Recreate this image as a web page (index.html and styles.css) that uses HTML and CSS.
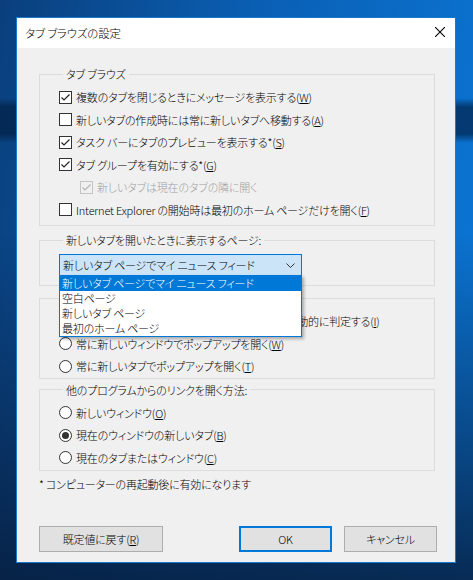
FILE: index.html
```html
<!DOCTYPE html>
<html lang="ja">
<head>
  <meta charset="UTF-8" />
  <title>タブ ブラウズの設定</title>
  <link rel="stylesheet" href="styles.css">
</head>
<body>

<div class="dialog">
  <div class="titlebar">
    <span class="title">タブ ブラウズの設定</span>
    <span class="close">
      <svg width="10" height="10" viewBox="0 0 10 10"><path d="M0 0L10 10M10 0L0 10" stroke="#000" stroke-width="1.1" fill="none"/></svg>
    </span>
  </div>

  <div class="content">
    <fieldset class="group group-tabs">
      <legend>タブ ブラウズ</legend>
      <div class="row"><span class="check on"></span>複数のタブを閉じるときにメッセージを表示する(<u>W</u>)</div>
      <div class="row"><span class="check"></span>新しいタブの作成時には常に新しいタブへ移動する(<u>A</u>)</div>
      <div class="row"><span class="check on"></span>タスク バーにタブのプレビューを表示する*(<u>S</u>)</div>
      <div class="row"><span class="check on"></span>タブ グループを有効にする*(<u>G</u>)</div>
      <div class="row sub disabled"><span class="check on"></span>新しいタブは現在のタブの隣に開く</div>
      <div class="row"><span class="check"></span>Internet Explorer の開始時は最初のホーム ページだけを開く(<u>F</u>)</div>
    </fieldset>

    <fieldset class="group group-page">
      <legend>新しいタブを開いたときに表示するページ:</legend>
      <div class="combo">
        <span class="combo-value">新しいタブ ページでマイ ニュース フィード</span>
        <svg class="combo-arrow" width="9" height="5" viewBox="0 0 9 5"><path d="M0.5 0.5L4.5 4.5L8.5 0.5" stroke="#333" stroke-width="1" fill="none"/></svg>
        <ul class="combo-list">
          <li class="combo-item selected">新しいタブ ページでマイ ニュース フィード</li>
          <li class="combo-item">空白ページ</li>
          <li class="combo-item">新しいタブ ページ</li>
          <li class="combo-item">最初のホーム ページ</li>
        </ul>
      </div>
    </fieldset>

    <fieldset class="group group-popup">
      <legend>ポップアップの発生時:</legend>
      <div class="row"><span class="radio"></span>ポップアップを開く方法を Internet Explorer で自動的に判定する(<u>I</u>)</div>
      <div class="row"><span class="radio"></span>常に新しいウィンドウでポップアップを開く(<u>W</u>)</div>
      <div class="row"><span class="radio"></span>常に新しいタブでポップアップを開く(<u>T</u>)</div>
    </fieldset>

    <fieldset class="group group-links">
      <legend>他のプログラムからのリンクを開く方法:</legend>
      <div class="row"><span class="radio"></span>新しいウィンドウ(<u>O</u>)</div>
      <div class="row"><span class="radio on"></span>現在のウィンドウの新しいタブ(<u>B</u>)</div>
      <div class="row"><span class="radio"></span>現在のタブまたはウィンドウ(<u>C</u>)</div>
    </fieldset>

    <p class="note">* コンピューターの再起動後に有効になります</p>
  </div>

  <div class="buttons">
    <button class="btn btn-reset">既定値に戻す(<u>R</u>)</button>
    <div class="btn-group">
      <button class="btn btn-ok">OK</button>
      <button class="btn">キャンセル</button>
    </div>
  </div>
</div>

</body>
</html>
```

FILE: styles.css
```css
html, body {
  margin: 0;
  height: 580px;
  overflow: hidden;
}

body {
  padding: 17px 0 0 16px;
  box-sizing: border-box;
  font-family: "Noto Sans CJK JP", "Noto Sans", sans-serif;
  font-size: 11px;
  font-weight: 300;
  letter-spacing: -0.2px;
  line-height: 16px;
  font-feature-settings: "palt";
  color: #000;
  background-color: #0b4c8f;
  background-image:
    linear-gradient(180deg, rgba(0, 0, 0, 0) 98px, rgba(0, 28, 62, 0.65) 107px, rgba(0, 28, 62, 0.65) 134px, rgba(0, 0, 0, 0) 143px),
    linear-gradient(180deg, rgba(4, 20, 45, 0) 40%, rgba(6, 24, 52, 0.8) 100%),
    linear-gradient(100deg, #0a3f7c 0%, #0a5fb4 45%, #0b78d8 100%);
}

/* Dialog frame */
.dialog {
  width: 440px;
  height: 546px;
  box-sizing: border-box;
  border: 1px solid #1979ca;
  background: #f0f0f0;
  display: flex;
  flex-direction: column;
}

.titlebar {
  height: 30px;
  background: #fff;
  display: flex;
  align-items: center;
}
.title {
  padding-left: 8px;
  flex: 1;
  font-size: 11.5px;
}
.close {
  width: 30px;
  height: 30px;
  display: flex;
  align-items: center;
  justify-content: center;
  margin-top: -2px;
}

.content {
  flex: 1;
  padding: 18px 20px 0 22px;
}

/* Group boxes */
.group {
  margin: 0;
  border: 1px solid #dcdcdc;
  padding: 4px 10px 4px 19px;
  min-width: 0;
}
.group legend {
  padding: 0 3px;
  margin-left: 4px;
  line-height: 16px;
}
.group-page {
  margin-top: 6px;
  padding: 6px 10px 9px 19px;
}
.group-popup {
  margin-top: 4px;
  padding-bottom: 0;
}
.group-links {
  margin-top: 3px;
  padding-bottom: 1px;
}

.row {
  height: 22.5px;
  display: flex;
  align-items: center;
  white-space: nowrap;
}
.row.sub {
  padding-left: 21px;
}
.row.disabled {
  color: #a0a0a0;
}

/* Check boxes and radio buttons */
.check, .radio {
  width: 13px;
  height: 13px;
  box-sizing: border-box;
  border: 1px solid #333;
  background: #fff;
  margin-right: 4px;
  flex: none;
  position: relative;
}
.check.on {
  background: #fff url("data:image/svg+xml,%3Csvg xmlns='http://www.w3.org/2000/svg' width='11' height='11' viewBox='0 0 11 11'%3E%3Cpath d='M1.5 5.5L4 8L9.5 2.5' stroke='%23222' stroke-width='1.2' fill='none'/%3E%3C/svg%3E") center / 11px 11px no-repeat;
}
.disabled .check {
  border-color: #c4c4c4;
  background-color: transparent;
}
.disabled .check.on {
  background: url("data:image/svg+xml,%3Csvg xmlns='http://www.w3.org/2000/svg' width='11' height='11' viewBox='0 0 11 11'%3E%3Cpath d='M1.5 5.5L4 8L9.5 2.5' stroke='%23b4b4b4' stroke-width='1.2' fill='none'/%3E%3C/svg%3E") center / 11px 11px no-repeat;
}
.radio {
  border-radius: 50%;
}
.radio.on::after {
  content: "";
  position: absolute;
  left: 2px;
  top: 2px;
  width: 7px;
  height: 7px;
  border-radius: 50%;
  background: #333;
}

/* Combo box with open list */
.combo {
  position: relative;
  width: 243px;
  height: 22px;
  box-sizing: border-box;
  border: 1px solid #0078d7;
  background: #cce4f7;
  display: flex;
  align-items: center;
  padding-left: 3px;
}
.combo-value {
  flex: 1;
  white-space: nowrap;
}
.combo-arrow {
  margin-right: 6px;
}
.combo-list {
  position: absolute;
  left: -1px;
  top: 20px;
  width: 243px;
  box-sizing: border-box;
  margin: 0;
  padding: 0;
  list-style: none;
  background: #fff;
  border: 1px solid #0078d7;
  box-shadow: 2px 2px 3px rgba(0, 0, 0, 0.3);
  z-index: 2;
}
.combo-item {
  height: 15px;
  line-height: 15px;
  padding-left: 2px;
  white-space: nowrap;
}
.combo-item.selected {
  background: #0078d7;
  color: #fff;
}

.note {
  margin: 5px 0 0 0;
}

/* Bottom buttons */
.buttons {
  display: flex;
  justify-content: space-between;
  padding: 0 18px 10px 22px;
}
.btn-group {
  display: flex;
  gap: 12px;
}
.btn {
  font: inherit;
  letter-spacing: inherit;
  font-feature-settings: "palt";
  height: 26px;
  width: 93px;
  padding: 0;
  background: #e1e1e1;
  border: 1px solid #adadad;
  color: #000;
}
.btn-reset {
  width: 124px;
}
.btn-ok {
  border: 2px solid #0078d7;
}
```
